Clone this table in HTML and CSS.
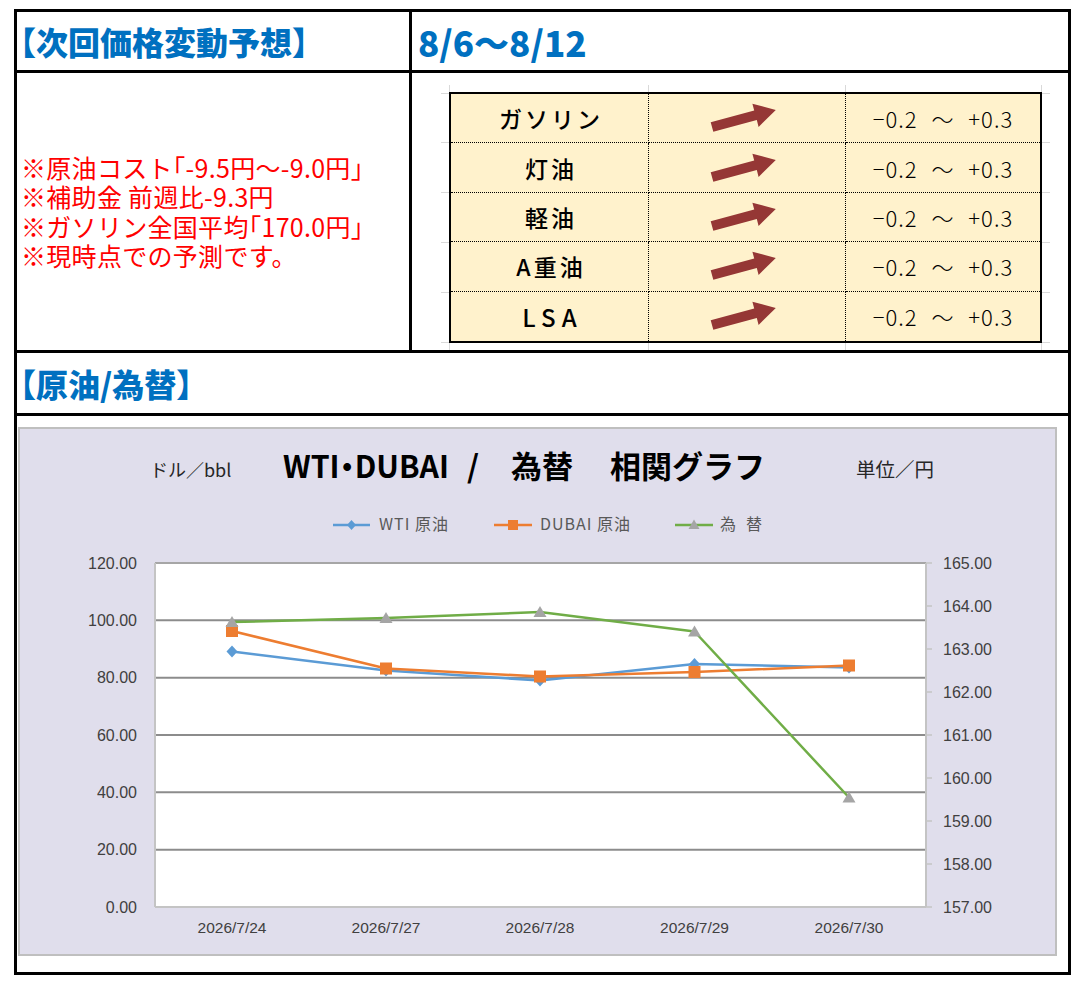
FILE: index.html
```html
<!DOCTYPE html>
<html lang="ja">
<head>
<meta charset="utf-8">
<title>次回価格変動予想</title>
<link rel="stylesheet" href="styles.css">
</head>
<body>
<div class="sheet">
  <div class="cell head">【次回価格変動予想】</div>
  <div class="cell head date col2">8/6〜8/12</div>

  <div class="cell notes">
    <p>※原油コスト「-9.5円〜-9.0円」</p>
    <p>※補助金 前週比-9.3円</p>
    <p>※ガソリン全国平均「170.0円」</p>
    <p>※現時点での予測です。</p>
  </div>
  <div class="cell pcell col2">
    <div class="pwrap">
      <div class="ptable">
        <div class="pc name">ガソリン</div>
        <div class="pc arrow"><svg width="68" height="30" viewBox="0 0 68 30"><polygon points="0.7,19.2 44.2,7.5 42.4,0.7 65.8,6.9 48.6,23.9 46.8,17.1 3.3,28.8" fill="#953735"/></svg></div>
        <div class="pc range">−0.2 〜 +0.3</div>

        <div class="pc name">灯油</div>
        <div class="pc arrow"><svg width="68" height="30" viewBox="0 0 68 30"><polygon points="0.7,19.2 44.2,7.5 42.4,0.7 65.8,6.9 48.6,23.9 46.8,17.1 3.3,28.8" fill="#953735"/></svg></div>
        <div class="pc range">−0.2 〜 +0.3</div>

        <div class="pc name">軽油</div>
        <div class="pc arrow"><svg width="68" height="30" viewBox="0 0 68 30"><polygon points="0.7,19.2 44.2,7.5 42.4,0.7 65.8,6.9 48.6,23.9 46.8,17.1 3.3,28.8" fill="#953735"/></svg></div>
        <div class="pc range">−0.2 〜 +0.3</div>

        <div class="pc name">A重油</div>
        <div class="pc arrow"><svg width="68" height="30" viewBox="0 0 68 30"><polygon points="0.7,19.2 44.2,7.5 42.4,0.7 65.8,6.9 48.6,23.9 46.8,17.1 3.3,28.8" fill="#953735"/></svg></div>
        <div class="pc range">−0.2 〜 +0.3</div>

        <div class="pc name lsa last">LSA</div>
        <div class="pc arrow last"><svg width="68" height="30" viewBox="0 0 68 30"><polygon points="0.7,19.2 44.2,7.5 42.4,0.7 65.8,6.9 48.6,23.9 46.8,17.1 3.3,28.8" fill="#953735"/></svg></div>
        <div class="pc range last">−0.2 〜 +0.3</div>
      </div>
    </div>
  </div>

  <div class="cell head wide">【原油/為替】</div>

  <div class="cell chartcell wide">
    <div class="chart">
      <svg class="graph" width="1035" height="525" viewBox="20 429 1035 525">
        <!-- titles -->
        <text class="sub" x="150" y="477">ドル／bbl</text>
        <text class="ttl" x="283" y="478" textLength="166" lengthAdjust="spacingAndGlyphs">WTI・DUBAI</text>
        <text class="ttl" x="467" y="478">/</text>
        <text class="ttl" x="511" y="478">為替</text>
        <text class="ttl" x="610" y="478">相関グラフ</text>
        <text class="sub2" x="856" y="477">単位／円</text>

        <!-- legend -->
        <line x1="333" y1="525" x2="370" y2="525" stroke="#5b9bd5" stroke-width="2.5"/>
        <polygon points="351.5,520 356,525 351.5,530 347,525" fill="#5b9bd5"/>
        <text class="leg" x="379" y="530" textLength="69">WTI 原油</text>
        <line x1="494" y1="525" x2="532" y2="525" stroke="#ed7d31" stroke-width="2.5"/>
        <rect x="508" y="520" width="10" height="10" fill="#ed7d31"/>
        <text class="leg" x="540" y="530" textLength="90">DUBAI 原油</text>
        <line x1="675" y1="525" x2="713" y2="525" stroke="#70ad47" stroke-width="2.5"/>
        <polygon points="694,519.5 699.5,529 688.5,529" fill="#a5a5a5"/>
        <text class="leg" x="720" y="530" textLength="42">為 替</text>

        <!-- plot area -->
        <rect x="155" y="563" width="771" height="344" fill="#ffffff"/>
        <g stroke="#8c8c8c" stroke-width="2">
          <line x1="155" y1="620.3" x2="926" y2="620.3"/>
          <line x1="155" y1="677.7" x2="926" y2="677.7"/>
          <line x1="155" y1="735" x2="926" y2="735"/>
          <line x1="155" y1="792.3" x2="926" y2="792.3"/>
          <line x1="155" y1="849.7" x2="926" y2="849.7"/>
        </g>
        <line x1="155" y1="563" x2="926" y2="563" stroke="#a6a6a6" stroke-width="2"/>
        <line x1="155" y1="907" x2="926" y2="907" stroke="#c4c4c4" stroke-width="2"/>
        <line x1="155" y1="563" x2="155" y2="907" stroke="#c4c4c4" stroke-width="2"/>
        <line x1="926" y1="563" x2="926" y2="907" stroke="#c4c4c4" stroke-width="2"/>
        <g stroke="#c4c4c4" stroke-width="1.5">
          <line x1="926" y1="563" x2="932" y2="563"/>
          <line x1="926" y1="606" x2="932" y2="606"/>
          <line x1="926" y1="649" x2="932" y2="649"/>
          <line x1="926" y1="692" x2="932" y2="692"/>
          <line x1="926" y1="735" x2="932" y2="735"/>
          <line x1="926" y1="778" x2="932" y2="778"/>
          <line x1="926" y1="821" x2="932" y2="821"/>
          <line x1="926" y1="864" x2="932" y2="864"/>
          <line x1="926" y1="907" x2="932" y2="907"/>
        </g>

        <!-- left axis -->
        <g class="ax" text-anchor="end">
          <text x="137" y="568.5">120.00</text>
          <text x="137" y="625.8">100.00</text>
          <text x="137" y="683.2">80.00</text>
          <text x="137" y="740.5">60.00</text>
          <text x="137" y="797.8">40.00</text>
          <text x="137" y="855.2">20.00</text>
          <text x="137" y="912.5">0.00</text>
        </g>
        <!-- right axis -->
        <g class="ax">
          <text x="943" y="568.5">165.00</text>
          <text x="943" y="611.5">164.00</text>
          <text x="943" y="654.5">163.00</text>
          <text x="943" y="697.5">162.00</text>
          <text x="943" y="740.5">161.00</text>
          <text x="943" y="783.5">160.00</text>
          <text x="943" y="826.5">159.00</text>
          <text x="943" y="869.5">158.00</text>
          <text x="943" y="912.5">157.00</text>
        </g>
        <!-- x axis -->
        <g class="xl" text-anchor="middle">
          <text x="232" y="933">2026/7/24</text>
          <text x="386" y="933">2026/7/27</text>
          <text x="540" y="933">2026/7/28</text>
          <text x="694.5" y="933">2026/7/29</text>
          <text x="849" y="933">2026/7/30</text>
        </g>

        <!-- WTI -->
        <polyline points="232,651.5 386,670.5 540,680.5 694.5,664 849,667.5" fill="none" stroke="#5b9bd5" stroke-width="2.5" stroke-linejoin="round"/>
        <g fill="#5b9bd5">
          <polygon points="232,645.5 237.5,651.5 232,657.5 226.5,651.5"/>
          <polygon points="386,664.5 391.5,670.5 386,676.5 380.5,670.5"/>
          <polygon points="540,674.5 545.5,680.5 540,686.5 534.5,680.5"/>
          <polygon points="694.5,658 700,664 694.5,670 689,664"/>
          <polygon points="849,661.5 854.5,667.5 849,673.5 843.5,667.5"/>
        </g>
        <!-- DUBAI -->
        <polyline points="232,631 386,668.5 540,676.5 694.5,672 849,665.5" fill="none" stroke="#ed7d31" stroke-width="2.5" stroke-linejoin="round"/>
        <g fill="#ed7d31">
          <rect x="226" y="625" width="12" height="12"/>
          <rect x="380" y="662.5" width="12" height="12"/>
          <rect x="534" y="670.5" width="12" height="12"/>
          <rect x="688.5" y="666" width="12" height="12"/>
          <rect x="843" y="659.5" width="12" height="12"/>
        </g>
        <!-- 為替 -->
        <polyline points="232,622 386,618 540,612 694.5,631.5 849,797.5" fill="none" stroke="#70ad47" stroke-width="2.5" stroke-linejoin="round"/>
        <g fill="#a5a5a5">
          <polygon points="232,616 238.5,627 225.5,627"/>
          <polygon points="386,612 392.5,623 379.5,623"/>
          <polygon points="540,606 546.5,617 533.5,617"/>
          <polygon points="694.5,625.5 701,636.5 688,636.5"/>
          <polygon points="849,791.5 855.5,802.5 842.5,802.5"/>
        </g>
      </svg>
    </div>
  </div>
</div>
</body>
</html>
```

FILE: styles.css
```css
html, body {
  margin: 0;
  padding: 0;
  background: #ffffff;
}

body {
  font-family: "Noto Sans CJK JP", "Noto Sans", sans-serif;
  color: #000;
}

.sheet {
  box-sizing: border-box;
  width: 1057px;
  margin: 9px 0 0 14px;
  border: 3px solid #000;
  display: grid;
  grid-template-columns: 392px 1fr;
  grid-template-rows: 61px 280px 63px 556px;
}

.cell {
  box-sizing: border-box;
  border-bottom: 3px solid #000;
  min-width: 0;
}

.col2 {
  border-left: 3px solid #000;
}

.wide {
  grid-column: 1 / span 2;
}

.head {
  display: flex;
  align-items: center;
  padding-left: 3px;
  color: #0070c0;
  font-weight: 900;
  font-size: 32px;
  font-feature-settings: "halt";
  line-height: 1;
}

.date {
  padding-left: 6px;
  font-size: 35px;
  letter-spacing: 0;
}

.notes {
  display: flex;
  flex-direction: column;
  justify-content: center;
  padding-left: 4px;
  color: #ff0000;
  font-size: 25px;
  line-height: 29.5px;
  font-feature-settings: "halt";
  letter-spacing: 0.3px;
}

.notes p {
  margin: 0;
  white-space: nowrap;
}

.pcell {
  padding: 12px 0 0 29px;
}

.pwrap {
  width: 593px;
  padding: 7px 8px;
  background-image:
    linear-gradient(#d9d9d9, #d9d9d9),
    linear-gradient(#d9d9d9, #d9d9d9),
    linear-gradient(#d9d9d9, #d9d9d9),
    linear-gradient(#d9d9d9, #d9d9d9),
    linear-gradient(#d9d9d9, #d9d9d9),
    linear-gradient(#d9d9d9, #d9d9d9),
    linear-gradient(#d9d9d9, #d9d9d9),
    linear-gradient(#d9d9d9, #d9d9d9),
    linear-gradient(#d9d9d9, #d9d9d9),
    linear-gradient(#d9d9d9, #d9d9d9);
  background-repeat: no-repeat;
  background-size:
    1px 100%, 1px 100%, 1px 100%, 1px 100%,
    100% 1px, 100% 1px, 100% 1px, 100% 1px, 100% 1px, 100% 1px;
  background-position:
    8px 0, 207px 0, 404px 0, 600px 0,
    0 8px, 0 57px, 0 107px, 0 157px, 0 207px, 0 257px;
}

.ptable {
  box-sizing: border-box;
  width: 593px;
  height: 251px;
  border: 2px solid #000;
  background: #fff2cc;
  display: grid;
  grid-template-columns: 198px 197px 1fr;
  grid-template-rows: repeat(5, 1fr);
}

.pc {
  box-sizing: border-box;
  display: flex;
  align-items: center;
  justify-content: center;
  border-bottom: 1px dotted #000;
  min-width: 0;
}

.pc.last {
  border-bottom: none;
}

.name, .arrow {
  border-right: 1px dotted #000;
}

.name {
  font-size: 23px;
  font-weight: 500;
  letter-spacing: 3px;
  padding-left: 3px;
}

.name.lsa {
  letter-spacing: 6px;
  font-size: 24px;
  padding-left: 6px;
}

.arrow svg {
  display: block;
  margin-left: -7px;
}

.range {
  font-size: 22px;
  font-weight: 300;
  letter-spacing: 1px;
  word-spacing: 8px;
  padding-left: 0;
}

.chartcell {
  border-bottom: none;
  padding: 11px 0 0 1px;
}

.chart {
  box-sizing: border-box;
  width: 1039px;
  height: 529px;
  border: 2px solid #bfbfbf;
  background: #e0deec;
}

.graph {
  display: block;
}

.ttl {
  font-family: "Noto Sans CJK JP", sans-serif;
  font-weight: 700;
  font-size: 31px;
  font-feature-settings: "halt";
  fill: #000;
}

.sub {
  font-family: "Noto Sans CJK JP", sans-serif;
  font-size: 18px;
  fill: #262626;
}

.sub2 {
  font-family: "Noto Sans CJK JP", sans-serif;
  font-size: 19.5px;
  fill: #262626;
}

.leg {
  font-family: "Noto Sans CJK JP", sans-serif;
  font-size: 16px;
  fill: #595959;
}

.ax {
  font-family: "Liberation Sans", Arial, sans-serif;
  font-size: 16px;
  fill: #404040;
}

.xl {
  font-family: "Liberation Sans", Arial, sans-serif;
  font-size: 15.5px;
  fill: #404040;
}
```
